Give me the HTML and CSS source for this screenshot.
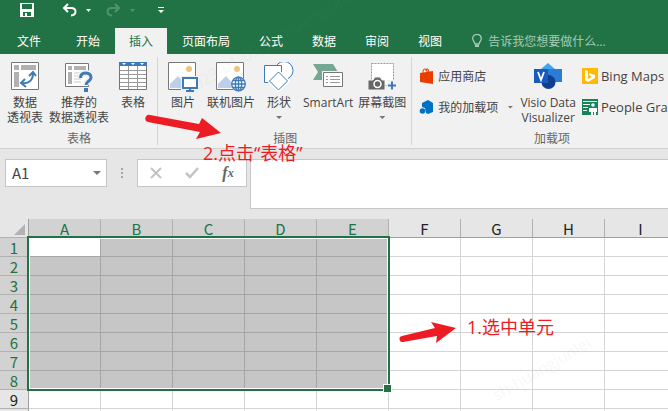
FILE: index.html
```
<!DOCTYPE html>
<html lang="zh-CN">
<head>
  <meta charset="UTF-8">
  <meta name="viewport" content="width=device-width, initial-scale=1.0">
  <title>Excel</title>
  <link rel="stylesheet" href="styles.css">
</head>
<body>
  <div class="wrap">
    <header class="top">
      <div class="quick">
        <button class="save" aria-label="保存">
          <svg width="14" height="14" viewBox="0 0 14 14"><path d="M0 0h14v14H0z" fill="#fff"/><path d="M2 1h10v5H2zM3 9h8v4H7v-3H5v3H3z" fill="#217346"/></svg>
        </button>
        <button class="undo" aria-label="撤消">
          <svg width="16" height="14" viewBox="0 0 16 14"><path d="M6 1L2 5l4 4M2 5h7c6 0 6 7 0 7.500" fill="none" stroke="#fff" stroke-width="2"/></svg>
          <svg width="5" height="3" viewBox="0 0 5 3"><path d="M0 0h5L2.500 3z" fill="#fff"/></svg>
        </button>
        <button class="redo" aria-label="恢复">
          <svg width="16" height="14" viewBox="0 0 16 14"><path d="M9 1l4 4-4 4M13 5H6C0 5 0 12 6 12.500" fill="none" stroke="#4f9370" stroke-width="2"/></svg>
          <svg width="5" height="3" viewBox="0 0 5 3"><path d="M0 0h5L2.500 3z" fill="#4f9370"/></svg>
        </button>
        <button class="more" aria-label="自定义快速访问工具栏">
          <svg width="6" height="7" viewBox="0 0 6 7"><path d="M0 0h6v1H0zM0 3h6L3 6z" fill="#fff"/></svg>
        </button>
      </div>
      <nav class="tabs">
        <button class="file">文件</button>
        <button>开始</button>
        <button class="check">插入</button>
        <button>页面布局</button>
        <button>公式</button>
        <button>数据</button>
        <button>审阅</button>
        <button>视图</button>
        <label class="tell">
          <svg width="10" height="14" viewBox="0 0 10 14"><path d="M3 10C3 8 .7 7 .7 4.600a4.300 4.300 0 0 1 8.600 0C9.300 7 7 8 7 10z" fill="none" stroke="#a6cbb7" stroke-width="1.300"/><path d="M3 11h4v2H3z" fill="#a6cbb7"/></svg>
          <input type="text" placeholder="告诉我您想要做什么..." aria-label="告诉我您想要做什么">
        </label>
      </nav>
    </header>

    <section class="ribbon">
      <div class="group">
        <div class="tools">
          <button class="tool">
            <svg width="28" height="28" viewBox="0 0 28 28" preserveAspectRatio="xMidYMin"><path d="M.5.5h27v27H.5z" fill="#fff" stroke="#777"/><path d="M3 3h5v5H3zM10 3h15v5H10zM3 10h5v15H3z" fill="#b1b1b1"/><path d="M11 21c7 1 11-3 11-10M14 17l-4 4 5 4M18 14l4-4 3 4" fill="none" stroke="#3e7ab8" stroke-width="2"/></svg>
            <span>数据<br>透视表</span>
          </button>
          <button class="tool">
            <svg width="28" height="30" viewBox="0 0 28 30"><path d="M.5 1.500h23v23H.5z" fill="#fff" stroke="#777"/><path d="M3 4h4v4H3zM9 4h12v4H9zM3 10h4v12H3z" fill="#b1b1b1"/><path d="M9 11h7M9 14h9M9 17h7M9 20h7" stroke="#c9c9c9"/><path d="M15.500 16c0-4 2-5 5-5 4 0 5.500 2 5.500 4.500 0 4-5 3.500-5 7.500" fill="none" stroke="#f1f1f1" stroke-width="6"/><path d="M15.500 16c0-4 2-5 5-5 4 0 5.500 2 5.500 4.500 0 4-5 3.500-5 7.500" fill="none" stroke="#3e7ab8" stroke-width="3"/><path d="M19 26h4v4h-4z" fill="#3e7ab8"/></svg>
            <span>推荐的<br>数据透视表</span>
          </button>
          <button class="tool">
            <svg width="28" height="28" viewBox="0 0 28 28" preserveAspectRatio="xMidYMin"><path d="M.5.5h27v27H.5z" fill="#fff" stroke="#777"/><path d="M0 0h28v4H0z" fill="#3e7ab8"/><path d="M3 1h4L5 3zM12 1h4l-2 2zM21 1h4l-2 2z" fill="#fff"/><path d="M1 8.500h26M1 12.500h26M1 16.500h26M1 20.500h26M1 24.500h26M9.500 4v23M18.500 4v23" stroke="#999"/></svg>
            <span>表格</span>
          </button>
        </div>
        <div class="title">表格</div>
      </div>

      <div class="group">
        <div class="tools">
          <button class="tool">
            <svg width="30" height="30" viewBox="0 0 30 30"><path d="M.5.5h27v27H.5z" fill="#fff" stroke="#777"/><circle cx="21" cy="7" r="3" fill="#eec480"/><path d="M2 26v-4l8-8 9 10v2z" fill="#bed0e8"/><path d="M13 14h17v16H13z" fill="#f1f1f1"/><path d="M15 16h14v10H15z" fill="#fff" stroke="#3e7ab8" stroke-width="2"/><path d="M21 27h2v1h3v2h-8v-2h3z" fill="#3e7ab8"/></svg>
            <span>图片</span>
          </button>
          <button class="tool">
            <svg width="30" height="30" viewBox="0 0 30 30"><path d="M.5.5h27v27H.5z" fill="#fff" stroke="#777"/><circle cx="21" cy="7" r="3" fill="#eec480"/><path d="M2 26v-4l8-8 9 10v2z" fill="#bed0e8"/><circle cx="22.500" cy="22" r="7.500" fill="#fff"/><g fill="none" stroke="#3e7ab8" stroke-width="1.300"><circle cx="22.500" cy="22" r="6.800"/><ellipse cx="22.500" cy="22" rx="3.200" ry="6.800"/><path d="M15.500 22h14M17 18.500h11M17 25.500h11M22.500 15v14"/></g></svg>
            <span>联机图片</span>
          </button>
          <button class="tool">
            <svg width="30" height="30" viewBox="0 0 30 30"><g fill="#fff" stroke="#3e7ab8"><circle cx="20" cy="8.500" r="9"/><path d="M.5 3.500h17v17H.5z"/><path d="M14.500 10l9 9-9 9-9-9z" stroke="#fff" stroke-width="4"/><path d="M14.500 10l9 9-9 9-9-9z"/></g></svg>
            <span>形状</span>
            <i class="down"></i>
          </button>
          <button class="tool">
            <svg width="30" height="28" viewBox="0 0 30 28" preserveAspectRatio="xMidYMin"><path d="M0 2h20l5 8-5 8H0l5-8z" fill="#75a892"/><path d="M9 9h21v17H9z" fill="#f1f1f1"/><path d="M10.500 10.500h19v14h-19z" fill="#fff" stroke="#777"/><path d="M13 14.500h2M17 14.500h10M13 17.500h2M17 17.500h10M13 20.500h2M17 20.500h10" stroke="#999"/></svg>
            <span>SmartArt</span>
          </button>
          <button class="tool">
            <svg width="30" height="30" viewBox="0 0 30 30"><path d="M4.500 1.500h22v22h-22z" fill="#fff" stroke="#999" stroke-dasharray="2 1"/><path d="M1 18h5l2-3h5l2 3h3v10H1z" fill="#666" stroke="#f1f1f1"/><circle cx="10.500" cy="22" r="3.500" fill="#666" stroke="#fff" stroke-width="1.500"/><path d="M20 18h10v11H20z" fill="#f1f1f1"/><path d="M21 23.500h8M25 19.500v8" stroke="#3e7ab8" stroke-width="2"/></svg>
            <span>屏幕截图</span>
            <i class="down"></i>
          </button>
        </div>
        <div class="title">插图</div>
      </div>

      <div class="group addins">
        <div class="tools">
          <div class="lines">
            <button>
              <svg width="16" height="16" viewBox="0 0 16 16"><path d="M1 5l13-2v13L1 14z" fill="#eb3c00"/><path d="M4 5V3q0-2 2-2t2 2v1M7 3q0-3 2-2l1 3" fill="none" stroke="#eb3c00"/></svg>
              应用商店
            </button>
            <button>
              <svg width="16" height="16" viewBox="0 0 16 16"><path d="M3 4l6-3 5 3v9l-5 2-2-1-1-5-3-1z" fill="#0072c6"/><circle cx="3.500" cy="12" r="2.800" fill="#0072c6"/></svg>
              我的加载项
              <i class="down"></i>
            </button>
          </div>
          <button class="tool">
            <svg width="28" height="28" viewBox="0 0 28 28" preserveAspectRatio="xMidYMin"><path d="M14 1l7 6-7 7-7-7z" fill="#41a5ee"/><path d="M14 7h14v13H14z" fill="#2b7cd3"/><circle cx="14.500" cy="20" r="7" fill="#103f91"/><path d="M0 7h14v14H0z" fill="#185abd"/><path d="M4 10l3 8 3-8" fill="none" stroke="#fff" stroke-width="1.800"/></svg>
            <span>Visio Data<br>Visualizer</span>
          </button>
          <div class="lines latin">
            <button>
              <svg width="16" height="16" viewBox="0 0 16 16"><path d="M0 0h16v16H0z" fill="#ffb900"/><path d="M3 2l3 1v8l4-2-2-1-1-3 6 2v3l-7 4-3-2z" fill="#fff"/></svg>
              Bing Maps
            </button>
            <button>
              <svg width="16" height="16" viewBox="0 0 16 16"><path d="M0 0h16v16H0z" fill="#158558"/><path d="M1 2h14v1H1zM1 5h7v1H1zM1 8h5v1H1zM1 11h4v1H1z" fill="#fff"/><circle cx="11" cy="6" r="1.800" fill="#fff"/><path d="M7 9h8v4h-1v3h-2v-3h-1v3H9v-3H7z" fill="#fff"/></svg>
              People Graph
            </button>
          </div>
        </div>
        <div class="title">加载项</div>
      </div>
    </section>

    <section class="formula">
      <div class="name">
        <input type="text" value="A1" aria-label="名称框">
        <button aria-label="名称列表"><i class="down"></i></button>
      </div>
      <svg class="grip" width="2" height="10" viewBox="0 0 2 10"><path d="M0 0h2v2H0zM0 4h2v2H0zM0 8h2v2H0z" fill="#a6a6a6"/></svg>
      <div class="edit">
        <button aria-label="取消"><svg width="12" height="12" viewBox="0 0 12 12"><path d="M1 1l10 10M11 1L1 11" stroke="#c3c3c3" stroke-width="2"/></svg></button>
        <button aria-label="输入"><svg width="14" height="12" viewBox="0 0 14 12"><path d="M1 6l4 4 8-9" fill="none" stroke="#c3c3c3" stroke-width="2.500"/></svg></button>
        <button class="fx" aria-label="插入函数">f<sub>x</sub></button>
      </div>
      <textarea class="content" aria-label="编辑栏"></textarea>
    </section>

    <main class="sheet">
      <table>
        <thead>
          <tr><th class="corner"><svg width="11" height="11" viewBox="0 0 11 11"><path d="M11 0v11H0z" fill="#b2b2b2"/></svg></th><th class="on">A</th><th class="on">B</th><th class="on">C</th><th class="on">D</th><th class="on">E</th><th>F</th><th>G</th><th>H</th><th>I</th></tr>
        </thead>
        <tbody>
          <tr class="on"><th>1</th><td class="active"></td><td></td><td></td><td></td><td></td><td></td><td></td><td></td><td></td></tr>
          <tr class="on"><th>2</th><td></td><td></td><td></td><td></td><td></td><td></td><td></td><td></td><td></td></tr>
          <tr class="on"><th>3</th><td></td><td></td><td></td><td></td><td></td><td></td><td></td><td></td><td></td></tr>
          <tr class="on"><th>4</th><td></td><td></td><td></td><td></td><td></td><td></td><td></td><td></td><td></td></tr>
          <tr class="on"><th>5</th><td></td><td></td><td></td><td></td><td></td><td></td><td></td><td></td><td></td></tr>
          <tr class="on"><th>6</th><td></td><td></td><td></td><td></td><td></td><td></td><td></td><td></td><td></td></tr>
          <tr class="on"><th>7</th><td></td><td></td><td></td><td></td><td></td><td></td><td></td><td></td><td></td></tr>
          <tr class="on"><th>8</th><td></td><td></td><td></td><td></td><td></td><td></td><td></td><td></td><td></td></tr>
          <tr><th>9</th><td></td><td></td><td></td><td></td><td></td><td></td><td></td><td></td><td></td></tr>
          <tr><th></th><td></td><td></td><td></td><td></td><td></td><td></td><td></td><td></td><td></td></tr>
        </tbody>
      </table>
      <div class="range"></div>
    </main>

    <!-- notes over the window -->
    <svg class="arrow arrow2" width="76" height="28" viewBox="0 0 76 28"><path d="M5 1l49 9 3-6 19 15-25 6 4-7L3 8A3.500 3.500 0 0 1 5 1z" fill="#ed1c24"/></svg>
    <p class="note note2">2.点击“表格”</p>
    <svg class="arrow arrow1" width="58" height="22" viewBox="0 0 58 22"><path d="M3 15l33-8-4-6 25 6-20 15 1-7-34 6a3 3 0 0 1-1-6z" fill="#ed1c24"/></svg>
    <p class="note note1">1.选中单元</p>
    <span class="mark mark1">2023-01-09_sh-huangjunlei</span>
    <span class="mark mark2">sh-huangjunlei</span>
  </div>
</body>
</html>
```

FILE: styles.css
```
*{
  margin: 0;
  padding: 0;
  box-sizing: border-box;
}
body{
  font: 12px/15px "Open Sans", "Noto Sans CJK SC", sans-serif;
  color: #444;
}
button, input, textarea{
  font: inherit;
  color: inherit;
  border: 0;
  background: none;
  white-space: nowrap;
}
svg{
  display: block;
  flex-shrink: 0;
}
.wrap{
  position: relative;
  height: 100vh;
  overflow: hidden;
  background-color: #fff;
}
.down{
  display: block;
  width: 6px;
  height: 3px;
  background-color: #777;
  clip-path: polygon(0 0, 100% 0, 50% 100%);
}

/* title bar and tabs */
.top{
  background-color: #217346;
  color: #fff;
}
.quick{
  display: flex;
  height: 28px;
  padding: 0 20px 8px;
  align-items: center;
}
.quick button{
  display: flex;
  align-items: center;
  gap: 8px;
}
.undo{
  margin-left: 28px;
}
.redo{
  margin-left: 15px;
}
.more{
  margin-left: 23px;
}
.tabs{
  display: flex;
  height: 26px;
  gap: 1px;
}
.tabs button{
  padding: 0 14px;
}
.tabs .file{
  padding: 0 20px 0 17px;
}
.tabs .check{
  background-color: #f1f1f1;
  color: #217346;
}
.tell{
  display: flex;
  flex: 1;
  align-items: center;
  gap: 6px;
  padding-left: 15px;
}
.tell input{
  flex: 1;
  min-width: 0;
}
.tell input::placeholder{
  color: #a6cbb7;
}

/* ribbon */
.ribbon{
  display: flex;
  height: 95px;
  background-color: #f1f1f1;
  border-bottom: 1px solid #d2d2d2;
}
.group{
  display: flex;
  flex-direction: column;
  flex-shrink: 0;
  padding: 8px 3px 0 4px;
  border-right: 1px solid #d4d4d4;
  border-image: linear-gradient(transparent 4%, #d4d4d4 4%, #d4d4d4 96%, transparent 96%) 1;
}
.tools{
  display: flex;
  height: 69px;
  gap: 1px;
}
.tool{
  display: flex;
  flex-direction: column;
  align-items: center;
  min-width: 42px;
  padding: 0 2px;
}
.tool span{
  margin-top: 3px;
}
.tool svg{
  height: 30px;
}
.tool .down{
  margin-top: 6px;
}
.title{
  text-align: center;
  color: #666;
}
.lines{
  display: flex;
  flex-direction: column;
  gap: 15px;
  padding: 6px 4px 0 3px;
}
.lines button{
  display: flex;
  align-items: center;
  gap: 3px;
  height: 16px;
}
.lines .down{
  margin-left: 6px;
}
.latin{
  font-size: 13px;
}

/* formula bar */
.formula{
  display: flex;
  height: 70px;
  padding: 10px 0 10px 5px;
  align-items: flex-start;
  background-color: #e6e6e6;
}
.name, .edit, .content{
  border: 1px solid #c6c6c6;
  background-color: #fff;
}
.name{
  display: flex;
  width: 102px;
  height: 28px;
  align-items: center;
}
.name input{
  flex: 1;
  min-width: 0;
  padding-left: 6px;
  font: 15px/20px "Noto Sans CJK SC", sans-serif;
}
.name button{
  padding: 6px 5px;
}
.name .down{
  width: 8px;
  height: 4px;
}
.grip{
  margin: 9px 14px;
}
.edit{
  display: flex;
  width: 110px;
  height: 28px;
}
.edit button{
  display: flex;
  flex: 1;
  align-items: center;
  justify-content: center;
}
.edit .fx{
  font: italic bold 16px/20px "Liberation Serif", serif;
  color: #666;
}
.fx sub{
  font-size: 12px;
}
.content{
  flex: 1;
  height: 50px;
  margin-left: 3px;
  border-right: 0;
  resize: none;
}

/* cells */
.sheet{
  position: relative;
}
table{
  width: 677px;
  table-layout: fixed;
  border-collapse: separate;
  border-spacing: 0;
}
th, td{
  width: 72px;
  height: 19px;
  border-right: 1px solid #d4d4d4;
  border-bottom: 1px solid #d4d4d4;
}
th{
  padding-top: 2px;
  font: 15px/16px "Noto Sans CJK SC", sans-serif;
  color: #222;
  background-color: #e6e6e6;
}
thead th{
  border-right-color: #b1b1b1;
  border-bottom-color: #9f9f9f;
}
th:first-child{
  width: 29px;
  border-right-color: #9f9f9f;
  border-bottom-color: #b1b1b1;
}
.corner svg{
  margin-left: 14px;
}
thead .on, tbody .on th{
  color: #217346;
  background-color: #d2d2d2;
}
.on td:nth-child(-n+6){
  background-color: #c6c6c6;
  border-color: #a6a6a6;
}
.on .active.active{
  background-color: #fff;
}
.range{
  position: absolute;
  left: 27px;
  top: 17px;
  width: 363px;
  height: 155px;
  border: 2px solid #217346;
  box-shadow: inset 0 0 0 1px #fff;
}
.range::after{
  content: "";
  position: absolute;
  right: -4px;
  bottom: -4px;
  width: 7px;
  height: 7px;
  border: 1px solid #fff;
  background-color: #217346;
}

/* notes */
.note, .arrow, .mark{
  position: absolute;
}
.note{
  font-size: 18px;
  line-height: 24px;
  color: #ed1c24;
}
.note1{
  left: 467px;
  top: 315px;
}
.note2{
  left: 203px;
  top: 141px;
}
.arrow1{
  left: 399px;
  top: 321px;
}
.arrow2{
  left: 145px;
  top: 114px;
}
.mark{
  font-size: 16px;
  line-height: 20px;
  color: #888;
  opacity: 0.05;
  transform: rotate(-30deg);
  transform-origin: left center;
  pointer-events: none;
}
.mark1{
  left: 186px;
  top: 80px;
}
.mark2{
  left: 494px;
  top: 386px;
}
```
